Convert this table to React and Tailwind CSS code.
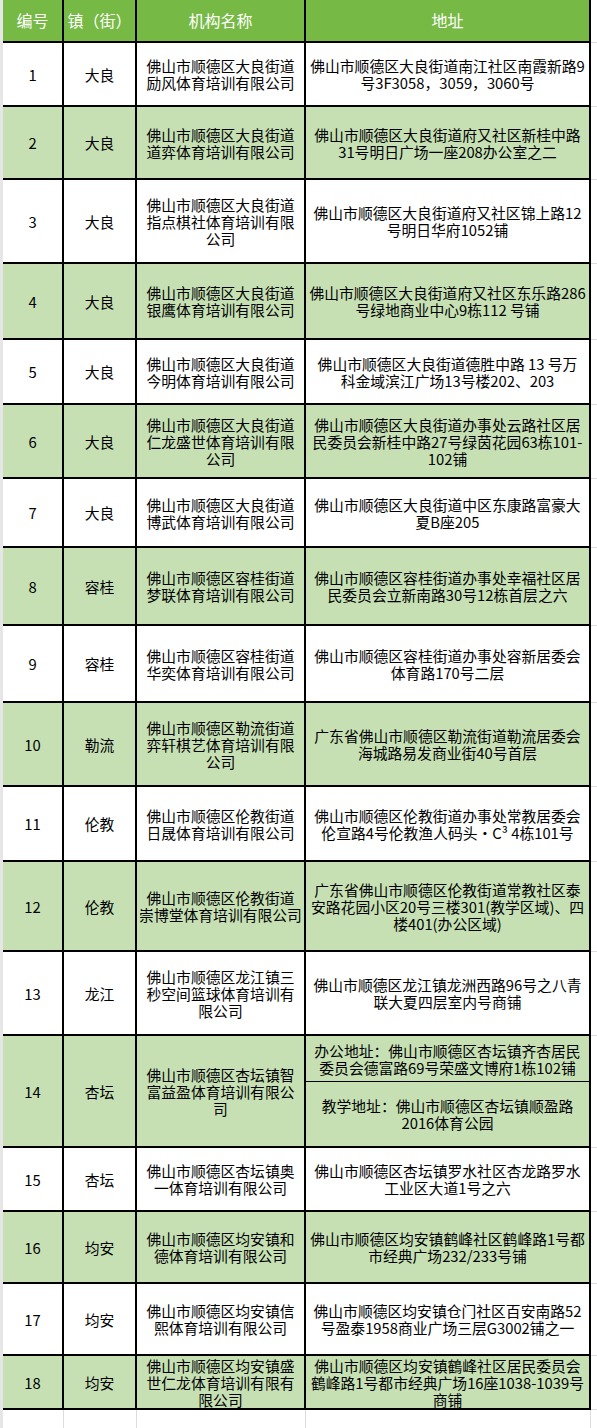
import React from "react";

const rows = [
  {
    no: "1",
    town: "大良",
    name: ["佛山市顺德区大良街道", "励风体育培训有限公司"],
    addr: ["佛山市顺德区大良街道南江社区南霞新路9", "号3F3058，3059，3060号"],
    h: "h-[64px]",
  },
  {
    no: "2",
    town: "大良",
    name: ["佛山市顺德区大良街道", "道弈体育培训有限公司"],
    addr: ["佛山市顺德区大良街道府又社区新桂中路", "31号明日广场一座208办公室之二"],
    h: "h-[73px]",
  },
  {
    no: "3",
    town: "大良",
    name: ["佛山市顺德区大良街道", "指点棋社体育培训有限", "公司"],
    addr: ["佛山市顺德区大良街道府又社区锦上路12", "号明日华府1052铺"],
    h: "h-[84px]",
  },
  {
    no: "4",
    town: "大良",
    name: ["佛山市顺德区大良街道", "银鹰体育培训有限公司"],
    addr: ["佛山市顺德区大良街道府又社区东乐路286", "号绿地商业中心9栋112 号铺"],
    h: "h-[76px]",
  },
  {
    no: "5",
    town: "大良",
    name: ["佛山市顺德区大良街道", "今明体育培训有限公司"],
    addr: ["佛山市顺德区大良街道德胜中路 13 号万", "科金域滨江广场13号楼202、203"],
    h: "h-[65px]",
  },
  {
    no: "6",
    town: "大良",
    name: ["佛山市顺德区大良街道", "仁龙盛世体育培训有限", "公司"],
    addr: ["佛山市顺德区大良街道办事处云路社区居", "民委员会新桂中路27号绿茵花园63栋101-", "102铺"],
    h: "h-[74px]",
  },
  {
    no: "7",
    town: "大良",
    name: ["佛山市顺德区大良街道", "博武体育培训有限公司"],
    addr: ["佛山市顺德区大良街道中区东康路富豪大", "夏B座205"],
    h: "h-[69px]",
  },
  {
    no: "8",
    town: "容桂",
    name: ["佛山市顺德区容桂街道", "梦联体育培训有限公司"],
    addr: ["佛山市顺德区容桂街道办事处幸福社区居", "民委员会立新南路30号12栋首层之六"],
    h: "h-[78px]",
  },
  {
    no: "9",
    town: "容桂",
    name: ["佛山市顺德区容桂街道", "华奕体育培训有限公司"],
    addr: ["佛山市顺德区容桂街道办事处容新居委会", "体育路170号二层"],
    h: "h-[77px]",
  },
  {
    no: "10",
    town: "勒流",
    name: ["佛山市顺德区勒流街道", "弈轩棋艺体育培训有限", "公司"],
    addr: ["广东省佛山市顺德区勒流街道勒流居委会", "海城路易发商业街40号首层"],
    h: "h-[84px]",
  },
  {
    no: "11",
    town: "伦教",
    name: ["佛山市顺德区伦教街道", "日晟体育培训有限公司"],
    addr: ["佛山市顺德区伦教街道办事处常教居委会", "伦宣路4号伦教渔人码头·C³ 4栋101号"],
    h: "h-[75px]",
  },
  {
    no: "12",
    town: "伦教",
    name: ["佛山市顺德区伦教街道", "崇博堂体育培训有限公司"],
    addr: ["广东省佛山市顺德区伦教街道常教社区泰", "安路花园小区20号三楼301(教学区域)、四", "楼401(办公区域)"],
    h: "h-[90px]",
  },
  {
    no: "13",
    town: "龙江",
    name: ["佛山市顺德区龙江镇三", "秒空间篮球体育培训有", "限公司"],
    addr: ["佛山市顺德区龙江镇龙洲西路96号之八青", "联大夏四层室内号商铺"],
    h: "h-[84px]",
  },
  {
    no: "14",
    town: "杏坛",
    name: ["佛山市顺德区杏坛镇智", "富益盈体育培训有限公", "司"],
    addr: ["办公地址：佛山市顺德区杏坛镇齐杏居民", "委员会德富路69号荣盛文博府1栋102铺"],
    addr2: ["教学地址：佛山市顺德区杏坛镇顺盈路", "2016体育公园"],
    h: "h-[46px]",
    h2: "h-[66px]",
  },
  {
    no: "15",
    town: "杏坛",
    name: ["佛山市顺德区杏坛镇奥", "一体育培训有限公司"],
    addr: ["佛山市顺德区杏坛镇罗水社区杏龙路罗水", "工业区大道1号之六"],
    h: "h-[64px]",
  },
  {
    no: "16",
    town: "均安",
    name: ["佛山市顺德区均安镇和", "德体育培训有限公司"],
    addr: ["佛山市顺德区均安镇鹤峰社区鹤峰路1号都", "市经典广场232/233号铺"],
    h: "h-[72px]",
  },
  {
    no: "17",
    town: "均安",
    name: ["佛山市顺德区均安镇信", "熙体育培训有限公司"],
    addr: ["佛山市顺德区均安镇仓门社区百安南路52", "号盈泰1958商业广场三层G3002铺之一"],
    h: "h-[72px]",
  },
  {
    no: "18",
    town: "均安",
    name: ["佛山市顺德区均安镇盛", "世仁龙体育培训有限有", "限公司"],
    addr: ["佛山市顺德区均安镇鶴峰社区居民委员会", "鶴峰路1号都市经典广场16座1038-1039号", "商铺"],
    h: "h-[54px]",
  },
];

const cell = "border-r-2 border-b-2 border-black text-center align-middle px-0.5";
const filler = "border-b border-[#dcdcdc] bg-white";

const Lines = ({ lines }) => (
  <>
    {lines.map((l, i) => (
      <span key={i} className="block whitespace-nowrap">
        {l}
      </span>
    ))}
  </>
);

export default function App() {
  return (
    <div className="flex w-[597px] h-[1428px] bg-white overflow-hidden font-[family-name:'Noto_Sans_CJK_SC',sans-serif] text-[14.8px] leading-[17px] text-black">
      <div className="w-[3px] shrink-0 bg-[#e6e6e6]" />
      <table className="table-fixed border-separate border-spacing-0 w-[594px] h-max">
        <colgroup>
          <col className="w-[61px]" />
          <col className="w-[73px]" />
          <col className="w-[169px]" />
          <col className="w-[285px]" />
          <col className="w-[6px]" />
        </colgroup>
        <thead>
          <tr className="h-[43px] bg-[#76b944] text-white text-[16px]">
            <th className={cell + " font-normal"}>编号</th>
            <th className={cell + " font-normal"}>镇（街）</th>
            <th className={cell + " font-normal"}>机构名称</th>
            <th className={cell + " font-normal"}>地址</th>
            <th className={filler} />
          </tr>
        </thead>
        <tbody>
          {rows.map((r, i) => {
            const bg = i % 2 === 1 ? "bg-[#c6e0b4]" : "bg-white";
            if (r.addr2) {
              return (
                <React.Fragment key={r.no}>
                  <tr className={r.h + " " + bg}>
                    <td rowSpan={2} className={cell}>{r.no}</td>
                    <td rowSpan={2} className={cell}>{r.town}</td>
                    <td rowSpan={2} className={cell}><Lines lines={r.name} /></td>
                    <td className="border-r-2 border-b border-black text-center align-middle px-0.5">
                      <Lines lines={r.addr} />
                    </td>
                    <td rowSpan={2} className={filler} />
                  </tr>
                  <tr className={r.h2 + " " + bg}>
                    <td className={cell}><Lines lines={r.addr2} /></td>
                  </tr>
                </React.Fragment>
              );
            }
            return (
              <tr key={r.no} className={r.h + " " + bg}>
                <td className={cell}>{r.no}</td>
                <td className={cell}>{r.town}</td>
                <td className={cell}><Lines lines={r.name} /></td>
                <td className={cell}><Lines lines={r.addr} /></td>
                <td className={filler} />
              </tr>
            );
          })}
          <tr className="h-[18px]">
            <td className="border-r border-[#dcdcdc]" />
            <td className="border-r border-[#dcdcdc]" />
            <td className="border-r border-[#dcdcdc]" />
            <td className="border-r border-[#dcdcdc]" />
            <td />
          </tr>
        </tbody>
      </table>
    </div>
  );
}
